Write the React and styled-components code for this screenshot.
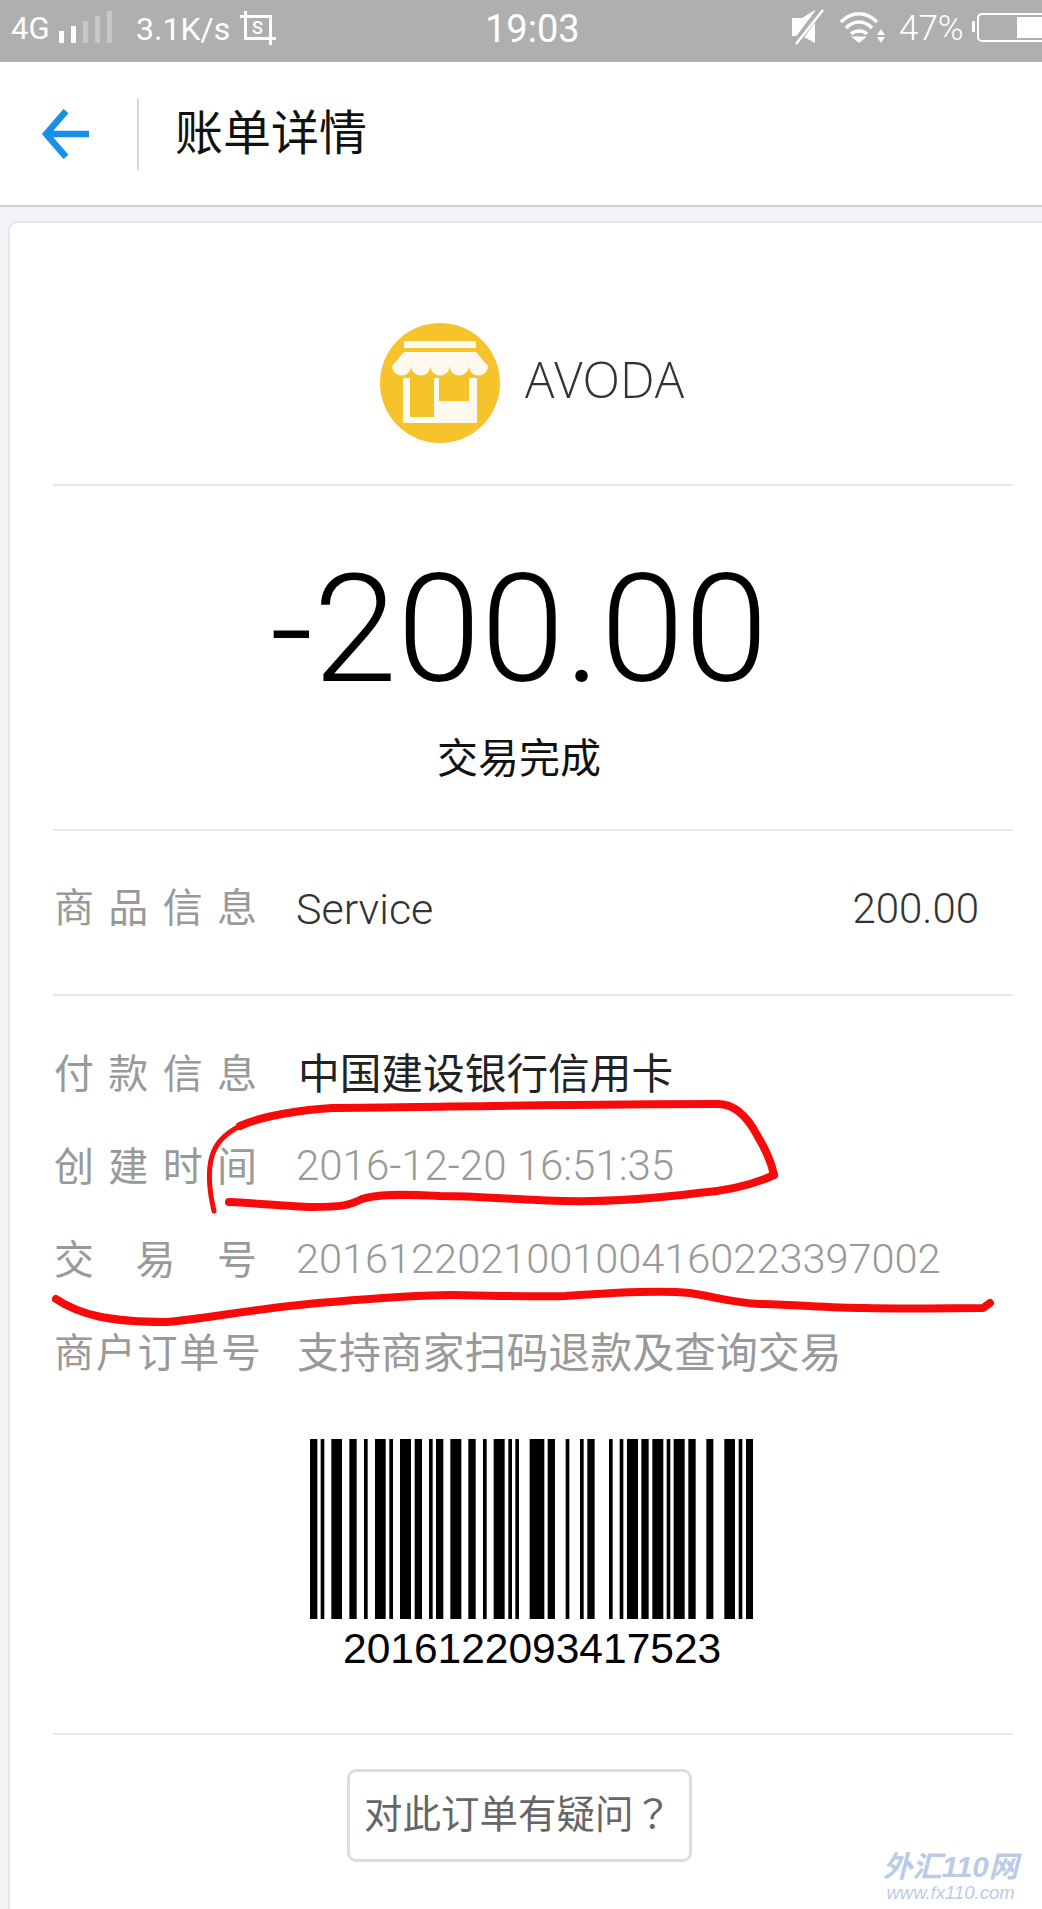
import React from 'react';
import styled, { createGlobalStyle } from 'styled-components';

const Global = createGlobalStyle`
  html, body { margin: 0; padding: 0; background: #f3f3f8; }
  * { box-sizing: border-box; }
`;
const LATIN = `Roboto, "Noto Sans CJK SC", "Liberation Sans", sans-serif`;
const CJK = `"Noto Sans CJK SC", "Liberation Sans", sans-serif`;

const Page = styled.div`
  position: relative; width: 1042px; height: 1909px; overflow: hidden;
  background: #f3f3f8; font-family: ${LATIN};
`;
const StatusBar = styled.div`
  height: 62px; background: #afafaf; color: #fff; display: flex; align-items: flex-start;
  padding-left: 11px; overflow: hidden;
`;
const StatusText = styled.span`
  flex: none; width: ${p => p.$w}px; white-space: nowrap;
  font-size: ${p => p.$size || 32}px; font-weight: ${p => p.$weight || 400}; line-height: 58px;
  margin-left: ${p => p.$ml || 0}px;
`;
const StatusIcon = styled.svg`
  flex: none; display: block; margin-left: ${p => p.$ml || 0}px; margin-top: ${p => p.$mt || 0}px;
`;
const Nav = styled.header`
  height: 145px; background: #fff; border-bottom: 2px solid #cfcfd3;
  display: flex; align-items: center; padding-left: 42px;
`;
const Back = styled.svg` flex: none; display: block; `;
const NavRule = styled.div` width: 2px; height: 72px; background: #d9d9d9; margin-left: 47px; `;
const Title = styled.h1`
  margin: 0 0 10px 36px; font-family: ${CJK}; font-weight: 400; font-size: 48px; color: #111; line-height: 1;
`;
const Card = styled.main`
  margin: 14px 0 0 8px; height: 1700px; background: #fff;
  border-top: 2px solid #e6e6ea; border-left: 2px solid #e6e6ea; border-top-left-radius: 10px;
  padding: 0 29px 0 43px;
`;
const Merchant = styled.section`
  height: 263px; border-bottom: 2px solid #e8e8e8; display: flex; align-items: flex-start;
  justify-content: center; padding: 100px 2px 0 0; gap: 25px;
`;
const MerchantName = styled.div`
  font-family: "Open Sans", sans-serif; font-weight: 300; font-size: 49px; line-height: 120px; color: #333;
  margin-top: -4px;
`;
const Summary = styled.section`
  height: 345px; border-bottom: 2px solid #e8e8e8; display: flex; flex-direction: column; align-items: center;
  padding-right: 28px;
`;
const Amount = styled.div`
  font-weight: 300; font-size: 151px; line-height: 174px; color: #000; margin-top: 57px;
`;
const Status = styled.div`
  font-family: ${CJK}; font-size: 41px; line-height: 56px; color: #111; margin-top: 10px;
`;
const Goods = styled.section`
  height: 165px; border-bottom: 2px solid #e8e8e8; display: flex; align-items: center; padding: 0 34px 8px 1px;
`;
const Label = styled.span`
  flex: none; width: ${p => p.$w || 203}px; font-family: ${CJK}; font-size: 40px; line-height: 56px; color: #999;
  text-align: justify; text-align-last: justify; margin-bottom: ${p => p.$up || 0}px;
`;
const Value = styled.span`
  margin-left: ${p => p.$ml || 39}px; font-family: ${p => p.$cjk ? CJK : LATIN}; font-weight: ${p => p.$cjk ? 400 : 300};
  font-size: ${p => p.$size || 41.5}px; line-height: 56px; color: ${p => p.$color}; white-space: nowrap;
  margin-top: ${p => p.$down || 0}px;
`;
const Price = styled.span`
  margin-left: auto; font-weight: 300; font-size: 42px; line-height: 56px; color: #333;
`;
const Info = styled.section`
  padding: 47px 0 0 1px; display: flex; flex-direction: column; gap: 37px;
`;
const InfoRow = styled.div` display: flex; align-items: center; height: 56px; `;
const BarcodeBlock = styled.div`
  height: 316px; border-bottom: 2px solid #e8e8e8; margin-top: 41px; padding-top: 20px;
  display: flex; flex-direction: column; align-items: flex-start; padding-left: 257px;
`;
const Bars = styled.svg` display: block; flex: none; `;
const BarcodeNumber = styled.div`
  font-family: "Liberation Sans", Arial, sans-serif; font-size: 42.5px; line-height: 56px; color: #000;
  margin: 2px 0 0 33px;
`;
const AskRow = styled.div` display: flex; justify-content: flex-start; padding: 34px 0 0 294px; `;
const AskButton = styled.button`
  width: 345px; height: 93px; background: #fff; border: 3px solid #ddd; border-radius: 9px; padding: 0 3px 9px 0;
  font-family: ${CJK}; font-size: 38.5px; color: #666; text-align: center;
`;
const QuestionMark = styled.span` font-family: "Noto Sans CJK TC", sans-serif; `;
const Scribble = styled.svg` position: absolute; left: 0; top: 0; pointer-events: none; `;
const Watermark = styled.div`
  position: absolute; left: 878px; top: 1851px; width: 145px; color: #b9cbe6; font-style: italic;
  display: flex; flex-direction: column; align-items: center;
`;
const WatermarkBrand = styled.div`
  font-family: "Liberation Sans", "Noto Sans CJK SC", sans-serif; font-size: 29.5px; line-height: 31px; white-space: nowrap; font-weight: 700;
`;
const WatermarkUrl = styled.div`
  font-family: "Liberation Sans", sans-serif; font-size: 18.5px; line-height: 21px; white-space: nowrap;
`;

const BARS = [[60,82],[92,103],[124,156],[178,200],[222,233],[255,287],[298,309],[330,363],[374,396],[417,428],[438,460],[481,514],[535,557],[579,590],[611,644],[655,666],[676,687],[719,763],[773,795],[827,838],[870,881],[892,914],[957,968],[989,1000],[1011,1044],[1054,1076],[1087,1120],[1130,1141],[1151,1184],[1195,1217],[1249,1270],[1303,1335],[1346,1357],[1368,1389]];

const StoreLogo = () => (
  <svg width="120" height="120" viewBox="0 0 120 120" style={{ flex: 'none', display: 'block' }}>
    <circle cx="60" cy="60" r="60" fill="#f6c32c" />
    <rect x="24" y="18" width="72" height="7" fill="#fffaf0" />
    <path fill="#fffaf0" d="M24 29H96L108 43A9.6 9.6 0 0 1 88.8 43A9.6 9.6 0 0 1 69.6 43A9.6 9.6 0 0 1 50.4 43A9.6 9.6 0 0 1 31.2 43A9.6 9.6 0 0 1 12 43Z" />
    <path fill="#fffaf0" fillRule="evenodd" d="M23 55H30V94H54V55H59V78H89V55H97V100H23Z" />
  </svg>
);

export default function App() {
  return (
    <Page>
      <Global />
      <StatusBar>
        <StatusText $size={31} $w={48}>4G</StatusText>
        <StatusIcon width="53" height="62" viewBox="59 0 53 62">
          <rect x="59" y="31" width="5" height="12" fill="#fff" />
          <rect x="71" y="26" width="5" height="17" fill="#fff" />
          <rect x="83" y="21" width="5" height="22" fill="#c6c6c6" />
          <rect x="95" y="16" width="5" height="27" fill="#c6c6c6" />
          <rect x="107" y="11" width="5" height="32" fill="#c6c6c6" />
        </StatusIcon>
        <StatusText $ml={24} $size={32} $w={104}>3.1K/s</StatusText>
        <StatusIcon width="36" height="62" viewBox="240 0 36 62">
          <path d="M245.500 11V38.500H276M240 16.500H270.500V45" fill="none" stroke="#fff" strokeWidth="3" />
          <text x="257.500" y="34" fontSize="18" fontWeight="500" fill="#fff" textAnchor="middle" fontFamily="Roboto">S</text>
        </StatusIcon>
        <StatusText $ml={209} $size={38} $w={307}>19:03</StatusText>
        <StatusIcon width="32" height="62" viewBox="792 0 32 62">
          <path d="M792 18H802L815 10V43L802 36H792Z" fill="#fff" />
          <path d="M821 9L794 45" stroke="#afafaf" strokeWidth="7" />
          <path d="M823 10L796 44" stroke="#fff" strokeWidth="2.500" />
        </StatusIcon>
        <StatusIcon $ml={15} width="46" height="62" viewBox="839 0 46 62">
          <path d="M841 22C852 11 866 11 877 22M846 28C854 20 864 20 872 28M851 34C855 30 863 30 867 34" fill="none" stroke="#fff" strokeWidth="3.500" />
          <path d="M851 36.500H867L859 43Z M877 35L881 29L885 35Z M877 37H885L881 43Z" fill="#fff" />
        </StatusIcon>
        <StatusText $ml={14} $size={35} $weight={300} $w={73}>47%</StatusText>
        <StatusIcon width="70" height="62" viewBox="972 0 70 62">
          <rect x="972" y="21" width="3" height="11" rx="1" fill="#fff" />
          <rect x="978" y="14" width="90" height="27" rx="4" fill="none" stroke="#fff" strokeWidth="2" />
          <rect x="1017" y="17" width="30" height="21" fill="#fff" />
        </StatusIcon>
      </StatusBar>
      <Nav>
        <Back width="48" height="50" viewBox="0 0 48 50">
          <path d="M24 2L4 25L24 48M4 25H47" fill="none" stroke="#1890ea" strokeWidth="6.500" />
        </Back>
        <NavRule />
        <Title>账单详情</Title>
      </Nav>
      <Card>
        <Merchant>
          <StoreLogo />
          <MerchantName>AVODA</MerchantName>
        </Merchant>
        <Summary>
          <Amount>-200.00</Amount>
          <Status>交易完成</Status>
        </Summary>
        <Goods>
          <Label $up={7}>商品信息</Label>
          <Value $size={43} $color="#333">Service</Value>
          <Price>200.00</Price>
        </Goods>
        <Info>
          <InfoRow><Label>付款信息</Label><Value $cjk $size={41.7} $ml={41} $color="#222">中国建设银行信用卡</Value></InfoRow>
          <InfoRow><Label>创建时间</Label><Value $size={42} $down={4} $color="#999">2016-12-20 16:51:35</Value></InfoRow>
          <InfoRow><Label>交易号</Label><Value $down={4} $color="#999">2016122021001004160223397002</Value></InfoRow>
          <InfoRow><Label $w={207}>商户订单号</Label><Value $cjk $size={41.9} $ml={36} $color="#999">支持商家扫码退款及查询交易</Value></InfoRow>
        </Info>
        <BarcodeBlock>
          <Bars width="443" height="180" viewBox="60 0 1329 180" preserveAspectRatio="none">
            {BARS.map(([a, b]) => <rect key={a} x={a} y="0" width={b - a} height="180" fill="#000" />)}
          </Bars>
          <BarcodeNumber>2016122093417523</BarcodeNumber>
        </BarcodeBlock>
        <AskRow><AskButton>对此订单有疑问<QuestionMark>？</QuestionMark></AskButton></AskRow>
      </Card>
      <Scribble width="1042" height="1909" viewBox="0 0 1042 1909">
        <path fill="none" stroke="#f80a0a" strokeWidth="5" strokeLinecap="round" strokeLinejoin="round"
          d="M214 1211C209 1190 208 1170 212 1156C216 1142 228 1132 240 1126" />
        <path fill="none" stroke="#f80a0a" strokeWidth="8" strokeLinecap="round" strokeLinejoin="round"
          d="M240 1126C262 1116 300 1110 332 1108C400 1108 560 1104 718 1104C735 1104 748 1118 757 1135C766 1150 772 1165 774 1175" />
        <path fill="none" stroke="#f80a0a" strokeWidth="8" strokeLinecap="round" strokeLinejoin="round"
          d="M774 1175C750 1186 725 1191 698 1193C650 1199 610 1202 565 1201C520 1200 480 1196 440 1196C400 1194 375 1194 362 1199C348 1206 340 1207 312 1207C285 1206 255 1203 229 1202" />
        <path fill="none" stroke="#f80a0a" strokeWidth="8" strokeLinecap="round" strokeLinejoin="round"
          d="M56 1299C80 1315 110 1322 166 1322C200 1320 260 1307 332 1302C390 1297 420 1295 452 1295C500 1296 540 1297 565 1296C620 1292 660 1290 690 1293C720 1298 735 1303 760 1304C800 1305 830 1308 864 1308C910 1309 950 1308 983 1308L990 1303" />
      </Scribble>
      <Watermark>
        <WatermarkBrand>外汇110网</WatermarkBrand>
        <WatermarkUrl>www.fx110.com</WatermarkUrl>
      </Watermark>
    </Page>
  );
}
